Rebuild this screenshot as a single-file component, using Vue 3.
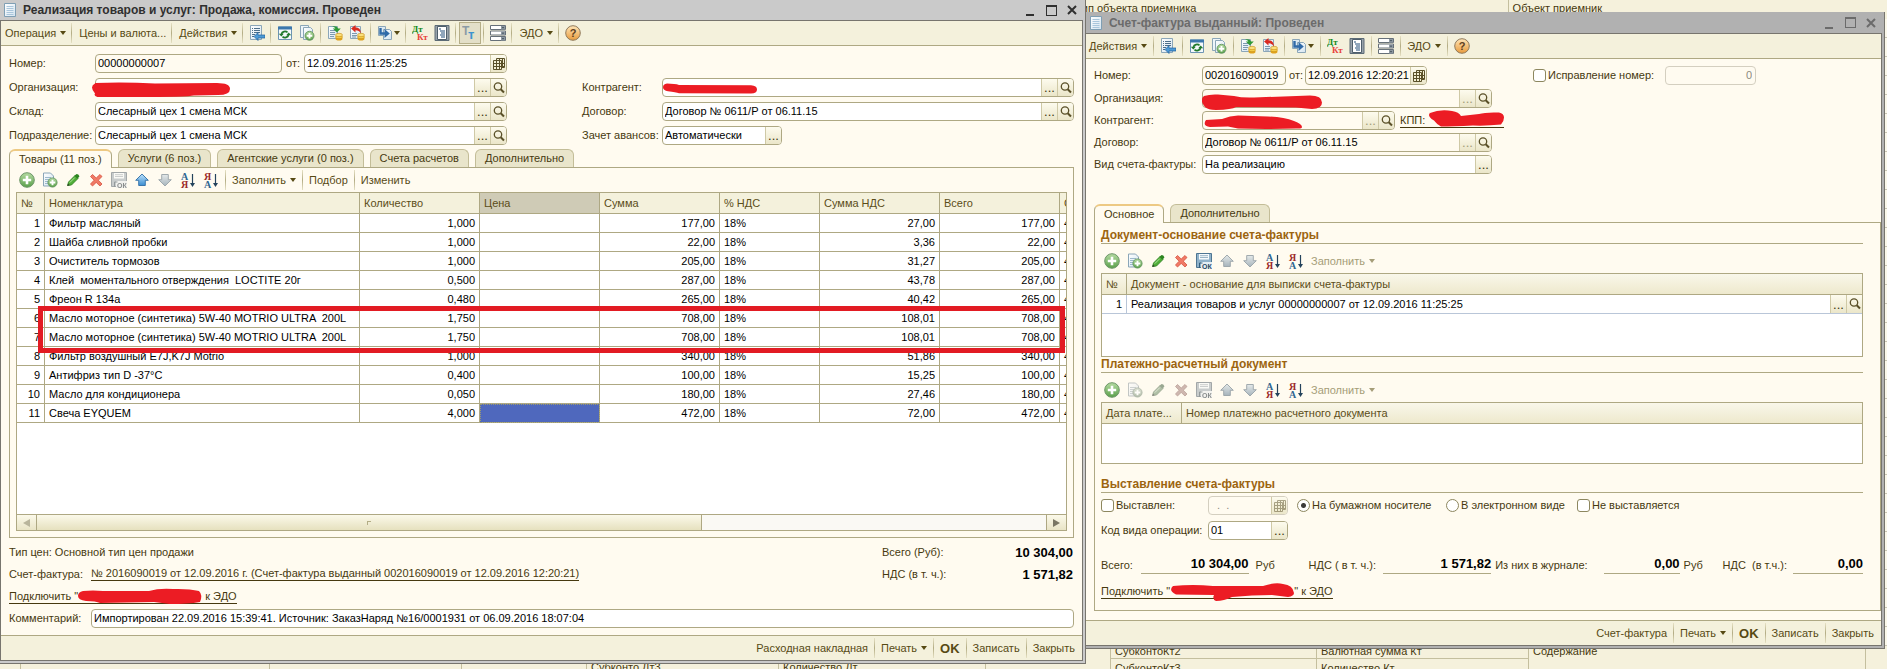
<script setup>
import { ref } from 'vue'

const sep = { kind: 'sep' }
const icon = (name, title, extra = {}) => ({ kind: 'icon', name, title, ...extra })
const text = (label, extra = {}) => ({ kind: 'text', label, ...extra })

const commonTools = [
  text('Действия', { menu: true }), sep,
  icon('goto', 'Найти в списке'), sep,
  icon('refresh', 'Перечитать'), icon('copy', 'Скопировать'), sep,
  icon('post', 'Провести'), icon('unpost', 'Отмена проведения'), sep,
  icon('based', 'На основании', { menu: true }), sep,
  icon('dtkt', 'Результат проведения'), icon('journal', 'Структура подчиненности'), sep
]
const tailTools = [
  icon('rack', 'Свойства'), sep,
  text('ЭДО', { menu: true }), sep,
  icon('help', 'Справка')
]
const saleTools = [
  text('Операция', { menu: true }), sep,
  text('Цены и валюта...'), sep,
  ...commonTools,
  icon('tt', 'Подбор строк', { pressed: true }), sep,
  ...tailTools
]
const invoiceTools = [...commonTools, ...tailTools]

const rowTools = (off = []) => [
  ['add', 'Добавить'], ['addcopy', 'Добавить копированием'], ['edit', 'Изменить'], ['del', 'Удалить'],
  ['save', 'Закончить редактирование'], ['up', 'Вверх'], ['down', 'Вниз'],
  ['sorta', 'По возрастанию'], ['sortz', 'По убыванию']
].map(([n, t]) => icon(n, t, { disabled: off.includes(n) }))

const goodsTools = [
  ...rowTools(['save', 'down']), sep,
  text('Заполнить', { menu: true }), sep,
  text('Подбор'), sep,
  text('Изменить')
]
const baseTools = [...rowTools(['up', 'down']), text('Заполнить', { menu: true, disabled: true })]
const payTools = [
  ...rowTools(['addcopy', 'edit', 'del', 'save', 'up', 'down']),
  text('Заполнить', { menu: true, disabled: true })
]

const footSale = [
  text('Расходная накладная'), sep, text('Печать', { menu: true }), sep,
  text('OK', { bold: true }), sep, text('Записать'), sep, text('Закрыть')
]
const footInvoice = [text('Счет-фактура'), ...footSale.slice(1)]

const saleTabs = ['Товары (11 поз.)', 'Услуги (6 поз.)', 'Агентские услуги (0 поз.)', 'Счета расчетов', 'Дополнительно']
const saleTab = ref(0)
const invoiceTabs = ['Основное', 'Дополнительно']
const invoiceTab = ref(0)

const goods = [
  ['Фильтр масляный', '1,000', '177,00', '27,00'],
  ['Шайба сливной пробки', '1,000', '22,00', '3,36'],
  ['Очиститель тормозов', '1,000', '205,00', '31,27'],
  ['Клей  моментального отверждения  LOCTITE 20г', '0,500', '287,00', '43,78'],
  ['Фреон R 134a', '0,480', '265,00', '40,42'],
  ['Масло моторное (синтетика) 5W-40 MOTRIO ULTRA  200L', '1,750', '708,00', '108,01'],
  ['Масло моторное (синтетика) 5W-40 MOTRIO ULTRA  200L', '1,750', '708,00', '108,01'],
  ['Фильтр воздушный E7J,K7J Motrio', '1,000', '340,00', '51,86'],
  ['Антифриз тип D -37°C', '0,400', '100,00', '15,25'],
  ['Масло для кондиционера', '0,050', '180,00', '27,46'],
  ['Свеча EYQUEM', '4,000', '472,00', '72,00']
]
</script>

<template>
  <svg class="paints" aria-hidden="true">
    <defs>
      <linearGradient id="g-green" x1="0" y1="0" x2="0" y2="1"><stop offset="0" stop-color="#b5dba2" /><stop offset="1" stop-color="#5aa04a" /></linearGradient>
      <linearGradient id="g-orange" x1="0" y1="0" x2="0" y2="1"><stop offset="0" stop-color="#ffe6b8" /><stop offset="1" stop-color="#e89a3c" /></linearGradient>
      <linearGradient id="g-blue" x1="0" y1="0" x2="0" y2="1"><stop offset="0" stop-color="#bfe3fb" /><stop offset="1" stop-color="#3b8ed2" /></linearGradient>
      <linearGradient id="g-doc" x1="0" y1="0" x2="1" y2="1"><stop offset="0" stop-color="#ffffff" /><stop offset="1" stop-color="#d3e4f0" /></linearGradient>
    </defs>
  </svg>
  <svg class="defs" aria-hidden="true">
    <symbol id="i-doc" viewBox="0 0 16 16">
      <path d="M2.5 1.500h11v13h-11z" fill="url(#g-doc)" stroke="#7f9fb4" />
      <path d="M4.500 4.500h7M4.500 6.500h7M4.500 8.500h7M4.500 10.500h7M4.500 12.500h7" stroke="#a9c6dc" />
    </symbol>
    <symbol id="i-goto" viewBox="0 0 16 16">
      <path d="M1.500 .5h11v14h-11z" fill="url(#g-doc)" stroke="#8ba6b8" />
      <path d="M3 3.500h1M5 3.500h6M3 5.500h1M5 5.500h6M3 7.500h1M5 7.500h6M3 9.500h3M3 11.500h2" stroke="#4d6f8a" />
      <path d="M5 11.500l4-4v2.500h7v3h-7v2.500z" fill="#4c9ad6" stroke="#1f5f9b" stroke-width=".7" />
    </symbol>
    <symbol id="i-refresh" viewBox="0 0 16 16">
      <path d="M1.500 2h13v12.500h-13z" fill="#f4f9fc" stroke="#6d94b3" />
      <path d="M1 1.500h14v3h-14z" fill="#3c78ad" />
      <path d="M4.500 9a3.500 3 0 0 1 6-1.600M11.500 10a3.500 3 0 0 1-6 1.600" fill="none" stroke="#217a2c" stroke-width="1.700" />
      <path d="M1.800 8.800h5l-2.500 2.700zM9.200 10.200h5l-2.500-2.700z" fill="#217a2c" />
    </symbol>
    <symbol id="i-copy" viewBox="0 0 16 16">
      <path d="M1.500 .5h8v12h-8z" fill="#eef5f9" stroke="#8ba6b8" />
      <path d="M4.500 2.500h7l2 2v10h-9z" fill="url(#g-doc)" stroke="#8ba6b8" />
      <circle cx="10.500" cy="10.800" r="4.500" fill="url(#g-green)" stroke="#5b8f56" stroke-width=".8" />
      <path d="M10.500 8v5.600M7.700 10.800h5.600" stroke="#fff" stroke-width="1.900" />
    </symbol>
    <symbol id="i-post" viewBox="0 0 16 16">
      <path d="M1.500 1.500h9v12h-9z" fill="url(#g-doc)" stroke="#8ba6b8" />
      <path d="M3 5.500h5M3 7.500h5M3 9.500h5M3 11.500h4" stroke="#7c9ab0" />
      <path d="M5 1.500q5-1 6 2h2.800l-4 4-4-4h2.600q-.5-1.500-3.400-2z" fill="#2f9a35" />
      <ellipse cx="12" cy="13.700" rx="3.500" ry="1.800" fill="#e0a21c" /><ellipse cx="12" cy="12" rx="3.500" ry="1.700" fill="#f7cf4a" stroke="#c88d14" stroke-width=".6" />
      <ellipse cx="12" cy="10" rx="3.500" ry="1.700" fill="#fbe07c" stroke="#c88d14" stroke-width=".6" />
    </symbol>
    <symbol id="i-unpost" viewBox="0 0 16 16">
      <path d="M1.500 1.500h10v12h-10z" fill="url(#g-doc)" stroke="#8ba6b8" />
      <path d="M3 8.500h5M3 10.500h5M3 12h4" stroke="#7c9ab0" />
      <path d="M2 3.500l4.500-3.500v2.200q5 0 5.500 6.300-2-3.200-5.500-3.200v2.200z" fill="#d92a1f" />
      <ellipse cx="12" cy="13.700" rx="3.500" ry="1.800" fill="#e0a21c" /><ellipse cx="12" cy="12" rx="3.500" ry="1.700" fill="#f7cf4a" stroke="#c88d14" stroke-width=".6" />
      <ellipse cx="12" cy="10" rx="3.500" ry="1.700" fill="#fbe07c" stroke="#c88d14" stroke-width=".6" />
    </symbol>
    <symbol id="i-based" viewBox="0 0 16 16">
      <path d="M1.500 1.500h7v9h-7z" fill="#dce9f1" stroke="#8ba6b8" />
      <path d="M6.500 4.500h6l2 2v8h-8z" fill="url(#g-doc)" stroke="#8ba6b8" />
      <path d="M3.500 3v5.500h5" fill="none" stroke="#2f6aa8" stroke-width="2.400" />
      <path d="M7.500 4l5.300 4.500-5.300 4.500z" fill="#2f6aa8" />
    </symbol>
    <symbol id="i-dtkt" viewBox="0 0 16 16">
      <text x="0" y="7" font-family="Liberation Serif" font-size="9" font-weight="700" fill="#168a1c">Дт</text>
      <text x="5" y="15" font-family="Liberation Serif" font-size="9" font-weight="700" fill="#e8413a">Кт</text>
    </symbol>
    <symbol id="i-journal" viewBox="0 0 16 16">
      <path d="M1 .5h14v15h-14z" fill="#98a2aa" stroke="#5c6b76" />
      <path d="M3.500 1.500h9v13h-9z" fill="#fff" stroke="#4f5f6c" />
      <path d="M5 4h2M6 6h5M7 8h4M6 10h5M7 12h4" stroke="#234f7a" stroke-width="1.200" />
    </symbol>
    <symbol id="i-tt" viewBox="0 0 16 16">
      <text x="0" y="10" font-family="Liberation Sans" font-size="12" font-weight="700" fill="#8b9aa5">Т</text>
      <text x="6" y="14" font-family="Liberation Sans" font-size="13" font-weight="700" fill="#3c93cf">т</text>
    </symbol>
    <symbol id="i-rack" viewBox="0 0 16 16">
      <g fill="#fff" stroke="#667079"><path d="M.5 .5h15v4h-15zM.5 6h15v4h-15zM.5 11.500h15v4h-15z" /></g>
      <path d="M11 1h4v3.500h-4zM11 6.500h4v3.500h-4zM11 12h4v3.500h-4z" fill="#8d98a1" />
      <path d="M12 2.200h2l-1 1.300zM12 7.700h2l-1 1.300zM12 13.200h2l-1 1.300z" fill="#1c2b36" />
    </symbol>
    <symbol id="i-help" viewBox="0 0 16 16">
      <circle cx="8" cy="8" r="7.300" fill="url(#g-orange)" stroke="#8f7a5c" />
      <text x="8" y="12" text-anchor="middle" font-family="Liberation Sans" font-size="11" font-weight="700" fill="#5d4020">?</text>
    </symbol>
    <symbol id="i-add" viewBox="0 0 16 16">
      <circle cx="8" cy="8" r="7.300" fill="url(#g-green)" stroke="#6d9668" />
      <path d="M8 3.800v8.400M3.800 8h8.400" stroke="#fff" stroke-width="2.600" />
    </symbol>
    <symbol id="i-addcopy" viewBox="0 0 16 16">
      <path d="M1.500 1h7l3 3v10h-10z" fill="url(#g-doc)" stroke="#8ba6b8" />
      <path d="M3 5.500h6M3 7.500h4M3 9.500h3M3 11.500h3" stroke="#9db9cc" />
      <circle cx="10.500" cy="10.500" r="4.600" fill="url(#g-green)" stroke="#5b8f56" stroke-width=".8" />
      <path d="M10.500 7.700v5.600M7.700 10.500h5.600" stroke="#fff" stroke-width="1.900" />
    </symbol>
    <symbol id="i-edit" viewBox="0 0 16 16">
      <path d="M2.500 13.500l1-3.500 6.500-6.500 3 3-6.500 6.500z" fill="#4fae37" stroke="#2b7d1f" stroke-width=".8" />
      <path d="M9.500 3.800l1.700-1.600q1 -.6 1.800 .2l1 1q.7 1 0 1.700l-1.600 1.600z" fill="#2c8420" />
      <path d="M2.300 14l.8-2.400 1.600 1.600z" fill="#34402a" />
      <path d="M4.800 10.600l5-5" stroke="#b3e59f" />
    </symbol>
    <symbol id="i-del" viewBox="0 0 16 16">
      <path d="M2.500 4.500l2-2 3.700 3.500 3.800-3.500 2 2-3.700 3.700 3.700 3.800-2 2-3.800-3.600-3.700 3.600-2-2 3.600-3.800z" fill="#f07a66" stroke="#d6523f" stroke-width=".8" />
    </symbol>
    <symbol id="i-save" viewBox="0 0 16 16">
      <path d="M.5 .5h15v14h-15z" fill="#8fb2ca" stroke="#4d7592" />
      <path d="M3 1h10v5.500h-10z" fill="#f6fafc" /><path d="M4 2.700h8M4 4.500h8" stroke="#9ab4c6" />
      <path d="M5 9h11v7h-11z" fill="#e4eef4" />
      <path d="M3.500 15v-5h3" fill="none" stroke="#35607f" />
      <text x="6" y="15.500" font-family="Liberation Sans" font-size="7" font-weight="700" fill="#27465d">ОК</text>
    </symbol>
    <symbol id="i-up" viewBox="0 0 16 16">
      <path d="M8 2l6.300 6.300h-3v5.200h-6.600v-5.200h-3z" fill="url(#g-blue)" stroke="#2f6ea6" stroke-width=".9" />
    </symbol>
    <symbol id="i-down" viewBox="0 0 16 16">
      <path d="M8 14l6.300-6.300h-3v-5.200h-6.600v5.200h-3z" fill="url(#g-blue)" stroke="#2f6ea6" stroke-width=".9" />
    </symbol>
    <symbol id="i-sorta" viewBox="0 0 16 16">
      <text x="1" y="7.500" font-family="Liberation Serif" font-size="10" font-weight="700" fill="#2f6690">А</text>
      <text x="1" y="15.500" font-family="Liberation Serif" font-size="10" font-weight="700" fill="#9c2a2a">Я</text>
      <path d="M12.500 2v11" stroke="#24435c" stroke-width="1.200" /><path d="M10 11h5l-2.500 4z" fill="#24435c" />
    </symbol>
    <symbol id="i-sortz" viewBox="0 0 16 16">
      <text x="1" y="7.500" font-family="Liberation Serif" font-size="10" font-weight="700" fill="#9c2a2a">Я</text>
      <text x="1" y="15.500" font-family="Liberation Serif" font-size="10" font-weight="700" fill="#2f6690">А</text>
      <path d="M12.500 2v11" stroke="#24435c" stroke-width="1.200" /><path d="M10 11h5l-2.500 4z" fill="#24435c" />
    </symbol>
    <symbol id="i-lens" viewBox="0 0 16 16">
      <circle cx="7" cy="6.500" r="3.700" fill="none" stroke="#5a5028" stroke-width="1.300" />
      <path d="M9.700 9.200l3.300 3.300" stroke="#5a5028" stroke-width="2" />
    </symbol>
    <symbol id="i-cal" viewBox="0 0 16 16">
      <path d="M5.500 2.500h8v9h-8z" fill="#f3efd2" stroke="#5a5028" />
      <path d="M2.500 4.500h8v9h-8z" fill="#f3efd2" stroke="#5a5028" />
      <path d="M2.500 7.500h11M2.500 10.500h11M5.500 4.500v9M8.500 2.500v11M11.500 2.500v9" stroke="#5a5028" />
    </symbol>
  </svg>

  <div class="desktop">
    <div class="backdrop" aria-hidden="true">
      <div class="strip strip-top">
        <span class="bcell b-from">Тип объекта приемника</span><span class="bcell b-to">Объект приемник</span>
      </div>
      <div class="strip strip-bottom">
        <span class="bcell"></span><span class="bcell"></span><span class="bcell"></span><span class="bcell"></span>
        <span class="bcell">Субконто Дт3</span><span class="bcell">Количество Дт</span><span class="bcell"></span>
        <div class="bcell two"><span>СубконтоКт2</span><span>СубконтоКт3</span></div>
        <div class="bcell two"><span>Валютная сумма Кт</span><span>Количество Кт</span></div>
        <div class="bcell two single"><span>Содержание</span></div>
        <span class="bcell"></span>
      </div>
    </div>

    <!-- Реализация товаров и услуг -->
    <section class="win sale">
      <header class="title">
        <svg class="ico"><use href="#i-doc" /></svg>
        <h1>Реализация товаров и услуг: Продажа, комиссия. Проведен</h1>
        <button class="wbtn" aria-label="Свернуть"><i class="w-min"></i></button>
        <button class="wbtn" aria-label="Развернуть"><i class="w-max"></i></button>
        <button class="wbtn" aria-label="Закрыть окно"><svg class="w-x" viewBox="0 0 10 10"><path d="M1 1l8 8M9 1l-8 8" /></svg></button>
      </header>
      <div class="body">
        <nav class="bar main-bar">
          <template v-for="(t, i) in saleTools" :key="i">
            <i v-if="t.kind === 'sep'" class="sep"></i>
            <button v-else class="tool" :class="{ pressed: t.pressed }" :title="t.title">
              <svg v-if="t.kind === 'icon'" class="ico"><use :href="'#i-' + t.name" /></svg>
              <span v-else>{{ t.label }}</span><i v-if="t.menu" class="arrow"></i>
            </button>
          </template>
        </nav>

        <form class="form" @submit.prevent>
          <label for="s-num">Номер:</label>
          <div class="pair">
            <div class="field ro num"><input id="s-num" value="00000000007" readonly /></div>
            <label for="s-date">от:</label>
            <div class="field"><input id="s-date" value="12.09.2016 11:25:25" /><button aria-label="Календарь"><svg class="ico"><use href="#i-cal" /></svg></button></div>
          </div>
          <i class="c3"></i>

          <label for="s-org">Организация:</label>
          <div class="field"><input id="s-org" />
            <svg class="mark m-org" viewBox="0 0 138 15"><path d="M3 1q30-1 60 .5l62-.5q13 0 13 6t-12 6l-24 .5q-6 1.500-60 1.500l-34 .5q-7-1-5-4-6-7 0-10z" /></svg>
            <button>...</button><button aria-label="Открыть"><svg class="ico"><use href="#i-lens" /></svg></button></div>
          <label class="c4" for="s-ctr">Контрагент:</label>
          <div class="field"><input id="s-ctr" />
            <svg class="mark m-ctr" viewBox="0 0 94 11"><path d="M4 .5q8 0 12 1.500l72 .2q6 .3 6 4.200t-6 4l-72-.2q-3-1-11-2-5-1-5-4t4-3.700z" /></svg>
            <button>...</button><button aria-label="Открыть"><svg class="ico"><use href="#i-lens" /></svg></button></div>

          <label for="s-store">Склад:</label>
          <div class="field"><input id="s-store" value="Слесарный цех 1 смена МСК" /><button>...</button><button aria-label="Открыть"><svg class="ico"><use href="#i-lens" /></svg></button></div>
          <label class="c4" for="s-dog">Договор:</label>
          <div class="field"><input id="s-dog" value="Договор № 0611/Р от 06.11.15" /><button>...</button><button aria-label="Открыть"><svg class="ico"><use href="#i-lens" /></svg></button></div>

          <label for="s-dep">Подразделение:</label>
          <div class="field"><input id="s-dep" value="Слесарный цех 1 смена МСК" /><button>...</button><button aria-label="Открыть"><svg class="ico"><use href="#i-lens" /></svg></button></div>
          <label class="c4" for="s-adv">Зачет авансов:</label>
          <div class="field short"><input id="s-adv" value="Автоматически" /><button>...</button></div>
        </form>

        <div class="tabs" role="tablist">
          <button v-for="(t, i) in saleTabs" :key="t" role="tab" class="tab" :class="{ on: saleTab === i }" :aria-selected="saleTab === i" @click="saleTab = i">{{ t }}</button>
        </div>
        <div class="panel goods-panel">
          <nav class="bar mini">
            <template v-for="(t, i) in goodsTools" :key="i">
              <i v-if="t.kind === 'sep'" class="sep"></i>
              <button v-else class="tool" :disabled="t.disabled" :title="t.title">
                <svg v-if="t.kind === 'icon'" class="ico"><use :href="'#i-' + t.name" /></svg>
                <span v-else>{{ t.label }}</span><i v-if="t.menu" class="arrow"></i>
              </button>
            </template>
          </nav>
          <div class="grid-box goods-box">
            <div class="clip">
              <table class="goods">
                <colgroup><col class="w28" /><col class="w315" /><col class="w120" /><col class="w120" /><col class="w120" /><col class="w100" /><col class="w120" /><col class="w120" /><col /></colgroup>
                <thead><tr><th>№</th><th>Номенклатура</th><th>Количество</th><th class="cur">Цена</th><th>Сумма</th><th>% НДС</th><th>Сумма НДС</th><th>Всего</th><th>С</th></tr></thead>
                <tbody>
                  <tr v-for="(g, i) in goods" :key="i">
                    <td class="r">{{ i + 1 }}</td><td>{{ g[0] }}</td><td class="r">{{ g[1] }}</td>
                    <td :class="{ sel: i === goods.length - 1 }"></td>
                    <td class="r">{{ g[2] }}</td><td>18%</td><td class="r">{{ g[3] }}</td><td class="r">{{ g[2] }}</td><td>4</td>
                  </tr>
                </tbody>
              </table>
              <div class="frame"></div>
            </div>
            <div class="scroll">
              <button class="sb left" aria-label="Влево"><i></i></button>
              <div class="thumb"><i></i></div>
              <div class="track"></div>
              <button class="sb right" aria-label="Вправо"><i></i></button>
            </div>
          </div>
        </div>

        <div class="info">
          <div class="irow"><span>Тип цен: Основной тип цен продажи</span><span class="tl">Всего (Руб):</span><output>10 304,00</output></div>
          <div class="irow"><span class="lab">Счет-фактура:</span><a class="link" href="#">№ 2016090019 от 12.09.2016 г. (Счет-фактура выданный 002016090019 от 12.09.2016 12:20:21)</a><span class="tl">НДС (в т. ч.):</span><output>1 571,82</output></div>
          <div class="irow"><a class="link" href="#">Подключить "<svg class="blot" viewBox="0 0 124 14"><path d="M5 2q10-1 20 0l46 0q10-3 24-2 16-.5 26 2 4 4 1 11-12 2-30 2l-16-2-54 1q-4-2-14-2-8-1-8-5t5-5z" /></svg> к ЭДО</a></div>
          <div class="irow comment"><label class="lab" for="s-com">Комментарий:</label><div class="field"><input id="s-com" value="Импортирован 22.09.2016 15:39:41. Источник: ЗаказНаряд №16/0001931 от 06.09.2016 18:07:04" /></div></div>
        </div>

        <footer class="bar foot">
          <template v-for="(t, i) in footSale" :key="i">
            <i v-if="t.kind === 'sep'" class="sep"></i>
            <button v-else class="tool" :class="{ bold: t.bold }"><span>{{ t.label }}</span><i v-if="t.menu" class="arrow"></i></button>
          </template>
        </footer>
      </div>
    </section>

    <!-- Счет-фактура выданный -->
    <section class="win invoice">
      <header class="title">
        <svg class="ico"><use href="#i-doc" /></svg>
        <h1>Счет-фактура выданный: Проведен</h1>
        <button class="wbtn" aria-label="Свернуть"><i class="w-min"></i></button>
        <button class="wbtn" aria-label="Развернуть"><i class="w-max"></i></button>
        <button class="wbtn" aria-label="Закрыть окно"><svg class="w-x" viewBox="0 0 10 10"><path d="M1 1l8 8M9 1l-8 8" /></svg></button>
      </header>
      <div class="body">
        <nav class="bar main-bar">
          <template v-for="(t, i) in invoiceTools" :key="i">
            <i v-if="t.kind === 'sep'" class="sep"></i>
            <button v-else class="tool" :title="t.title">
              <svg v-if="t.kind === 'icon'" class="ico"><use :href="'#i-' + t.name" /></svg>
              <span v-else>{{ t.label }}</span><i v-if="t.menu" class="arrow"></i>
            </button>
          </template>
        </nav>

        <form class="iform" @submit.prevent>
          <div class="frow">
            <label class="lab" for="i-num">Номер:</label>
            <div class="field ro w84"><input id="i-num" value="002016090019" readonly /></div>
            <label class="ot" for="i-date">от:</label>
            <div class="field ro w122"><input id="i-date" value="12.09.2016 12:20:21" readonly /><button aria-label="Календарь"><svg class="ico"><use href="#i-cal" /></svg></button></div>
            <label class="check fix"><input type="checkbox" />Исправление номер:</label>
            <div class="field ro off w91"><input class="r" aria-label="Номер исправления" value="0" disabled /></div>
          </div>
          <div class="frow">
            <label class="lab" for="i-org">Организация:</label>
            <div class="field ro w290"><input id="i-org" readonly />
              <svg class="mark m-iorg" viewBox="0 0 120 16"><path d="M2 2q6-2 14-1.500l16 1.500q8 2 20 1.500l56-2q12 0 12 7 0 6.500-10 6.500l-16-1.500-60-.5q-4 2.500-20 3-8 0-11-3-6-7-1-11z" /></svg>
              <button disabled>...</button><button aria-label="Открыть"><svg class="ico"><use href="#i-lens" /></svg></button></div>
          </div>
          <div class="frow">
            <label class="lab" for="i-ctr">Контрагент:</label>
            <div class="field ro w193"><input id="i-ctr" readonly />
              <svg class="mark m-ictr" viewBox="0 0 99 14"><path d="M3 5l16-1q8-3.500 16-3.500l30 1q16 .5 26 4.500 8 3 8 6 0 2-6 1.500l-30 .5-28-.5-10-2-18 .5q-8-1-4-7z" /></svg>
              <button disabled>...</button><button aria-label="Открыть"><svg class="ico"><use href="#i-lens" /></svg></button></div>
            <a class="link kpp" href="#">КПП: <svg class="blot b-kpp" viewBox="0 0 76 17"><path d="M2 3q10-4 22-2 7 1 9 5l18-2q6-2 20-1.500 5 1 5 5t-3 7q-14 1.500-28 1-20 1-32 1-5-3-7-6-7-4-4-8z" /></svg></a>
          </div>
          <div class="frow">
            <label class="lab" for="i-dog">Договор:</label>
            <div class="field ro w290"><input id="i-dog" value="Договор № 0611/Р от 06.11.15" readonly /><button disabled>...</button><button aria-label="Открыть"><svg class="ico"><use href="#i-lens" /></svg></button></div>
          </div>
          <div class="frow">
            <label class="lab" for="i-kind">Вид счета-фактуры:</label>
            <div class="field w290"><input id="i-kind" value="На реализацию" /><button>...</button></div>
          </div>
        </form>

        <div class="tabs" role="tablist">
          <button v-for="(t, i) in invoiceTabs" :key="t" role="tab" class="tab" :class="{ on: invoiceTab === i }" :aria-selected="invoiceTab === i" @click="invoiceTab = i">{{ t }}</button>
        </div>
        <div class="panel inv-panel">
          <h2>Документ-основание счета-фактуры</h2>
          <nav class="bar mini">
            <button v-for="(t, i) in baseTools" :key="i" class="tool" :disabled="t.disabled" :title="t.title">
              <svg v-if="t.kind === 'icon'" class="ico"><use :href="'#i-' + t.name" /></svg>
              <span v-else>{{ t.label }}</span><i v-if="t.menu" class="arrow"></i>
            </button>
          </nav>
          <div class="grid-box base-box">
            <table class="soft">
              <colgroup><col class="w25" /><col /></colgroup>
              <thead><tr><th>№</th><th>Документ - основание для выписки счета-фактуры</th></tr></thead>
              <tbody><tr><td class="r">1</td><td class="flush"><div class="cell">Реализация товаров и услуг 00000000007 от 12.09.2016 11:25:25<span class="cell-btns"><button>...</button><button aria-label="Открыть"><svg class="ico"><use href="#i-lens" /></svg></button></span></div></td></tr></tbody>
            </table>
          </div>
          <h2 class="tight">Платежно-расчетный документ</h2>
          <nav class="bar mini">
            <button v-for="(t, i) in payTools" :key="i" class="tool" :disabled="t.disabled" :title="t.title">
              <svg v-if="t.kind === 'icon'" class="ico"><use :href="'#i-' + t.name" /></svg>
              <span v-else>{{ t.label }}</span><i v-if="t.menu" class="arrow"></i>
            </button>
          </nav>
          <div class="grid-box pay-box">
            <table class="soft">
              <colgroup><col class="w80" /><col /></colgroup>
              <thead><tr><th>Дата плате...</th><th>Номер платежно расчетного документа</th></tr></thead>
            </table>
          </div>
          <h2 class="third">Выставление счета-фактуры</h2>
          <div class="orow">
            <label class="check olab"><input type="checkbox" />Выставлен:</label>
            <div class="field ro off w80f"><input aria-label="Дата выставления" value="  .  ." disabled /><button disabled aria-label="Календарь"><svg class="ico"><use href="#i-cal" /></svg></button></div>
            <label class="check r1"><input type="radio" name="way" checked />На бумажном носителе</label>
            <label class="check r2"><input type="radio" name="way" />В электронном виде</label>
            <label class="check r3"><input type="checkbox" />Не выставляется</label>
          </div>
          <div class="orow">
            <label class="olab" for="i-code">Код вида операции:</label>
            <div class="field w80f"><input id="i-code" value="01" /><button>...</button></div>
          </div>
          <div class="totals">
            <span>Всего:</span><output>10 304,00</output><span class="p7">Руб</span>
            <span>НДС ( в т. ч.):</span><output>1 571,82</output><span class="p4">Из них в журнале:</span>
            <output>0,00</output><span class="p4">Руб</span><span>НДС&nbsp; (в т.ч.):</span><output>0,00</output>
          </div>
          <div class="connect"><a class="link" href="#">Подключить "<svg class="blot b-inv" viewBox="0 0 124 16"><path d="M3 2q20-2 40 0l50 0q12-4 20-2 10 1 11 9 0 3-6 4l-16-2q-20 0-40 2-8 4-16 4-4-2-2-6-20-.5-38-.5-8-4-3-8.500z" /></svg>" к ЭДО</a></div>
        </div>

        <footer class="bar foot">
          <template v-for="(t, i) in footInvoice" :key="i">
            <i v-if="t.kind === 'sep'" class="sep"></i>
            <button v-else class="tool" :class="{ bold: t.bold }"><span>{{ t.label }}</span><i v-if="t.menu" class="arrow"></i></button>
          </template>
        </footer>
      </div>
    </section>
  </div>
</template>

<style>
body { margin: 0; background: #f5f1dc; }
</style>

<style scoped>
.paints { position: absolute; width: 0; height: 0; }
.defs { display: none; }
.desktop {
  --line: #aea883; --cream: #fffbf0; --bar: #f4f1dc; --ink: #46390f; --red: #ec1c24;
  position: relative; display: grid; grid-template-columns: 1086fr 801fr;
  min-height: 100vh; box-sizing: border-box; overflow: hidden;
  font: 11px/15px "Liberation Sans", Arial, sans-serif; color: var(--ink);
}
.desktop *, .desktop *::before { box-sizing: border-box; }
button, input { font: inherit; color: inherit; margin: 0; padding: 0; border: 0; background: none; }
i { display: block; }
.ico { width: 16px; height: 16px; display: block; flex: none; }

/* backdrop */
.backdrop { position: absolute; inset: 0; display: flex; flex-direction: column; justify-content: space-between; background: repeating-linear-gradient(#fbf8ea 0 18px, #c9c5b4 18px 19px); }
.strip { display: flex; background: #f5f1dc; overflow: hidden; }
.strip-top { height: 19px; margin-left: 57%; }
.strip-bottom { height: 23px; }
.bcell { border-left: 1px solid #c4bf9e; padding: 1px 4px; white-space: nowrap; overflow: hidden; }
.b-from { width: 432px; border: 0; padding-left: 0; }
.strip-bottom .bcell { width: 10%; padding-top: 14px; }
.strip-bottom .bcell:nth-child(1) { width: 20px; border: 0; }
.strip-bottom .bcell:nth-child(2) { width: 249px; }
.strip-bottom .bcell:nth-child(3) { width: 192px; }
.strip-bottom .bcell:nth-child(4) { width: 125px; }
.strip-bottom .bcell:nth-child(5) { width: 192px; }
.strip-bottom .bcell:nth-child(6) { width: 207px; }
.strip-bottom .bcell:nth-child(7) { width: 125px; }
.strip-bottom .bcell:nth-child(8) { width: 206px; }
.strip-bottom .bcell:nth-child(9) { width: 212px; }
.strip-bottom .bcell:nth-child(10) { width: 337px; }
.strip-bottom .bcell:nth-child(11) { flex: 1; }
.strip-bottom .two { display: flex; flex-direction: column; padding: 0; }
.two span { height: 13px; line-height: 10px; padding: 0 4px; border-bottom: 1px solid #c4bf9e; flex: none; }
.two span + span { line-height: 18px; border: 0; }
.two.single span { border: 0; }

/* windows */
.win { position: relative; display: flex; flex-direction: column; min-width: 0; background: #cacaca; border: solid #77756e; border-width: 0 1px 1px 0; padding: 0 2px 2px 0; }
.sale { margin-bottom: 5px; }
.invoice { margin: 12px 2px 20px 0; background: #b1b1b1; }
.title { display: flex; align-items: center; height: 20px; padding: 0 4px 0 2px; color: #2f2f2f; }
.invoice .title { height: 21px; color: #6b6b6b; }
.title h1 { flex: 1; margin: 0 0 0 5px; font: bold 12px/20px "Liberation Sans", sans-serif; white-space: nowrap; }
.wbtn { width: 14px; height: 14px; margin-left: 7px; display: flex; align-items: center; justify-content: center; color: inherit; }
.w-min { width: 8px; height: 2px; margin-top: 10px; background: currentColor; }
.w-max { width: 11px; height: 11px; border: 1px solid currentColor; border-top-width: 2px; }
.w-x { width: 10px; height: 10px; stroke: currentColor; stroke-width: 2; fill: none; }
.body { flex: 1; display: flex; flex-direction: column; background: var(--cream); border: 1px solid #77756e; min-height: 0; }
.invoice .body { border-left: 0; }

/* command bars */
.bar { display: flex; align-items: center; }
.main-bar { height: 25px; background: var(--bar); border-bottom: 1px solid var(--line); }
.tool { display: flex; align-items: center; height: 22px; padding: 0 3px; color: #574a14; white-space: nowrap; }
.tool.pressed { background: #e3dfc8; box-shadow: inset 0 0 0 1px #b5ae88; }
.tool.bold { font-weight: bold; font-size: 13px; }
.tool:disabled { color: #a59d78; }
.tool:disabled .ico { filter: grayscale(.7); opacity: .6; }
.arrow { width: 0; height: 0; margin-left: 4px; border: solid transparent; border-width: 4px 3px 0; border-top-color: currentColor; }
.ico + .arrow { margin-left: 1px; }
.sep { width: 1px; height: 20px; margin: 0 3px; background: linear-gradient(#e6e1c4, #b3ac84, #e6e1c4); flex: none; }
.sale .main-bar .sep { margin-left: 2px; }
.sale .main-bar span { padding-left: 1px; }
.mini { gap: 1px; }
.mini .sep { margin: 0 2px; }
.foot { height: 25px; justify-content: flex-end; padding-right: 4px; background: var(--bar); border-top: 1px solid var(--line); }

/* fields */
.field { position: relative; display: flex; height: 19px; min-width: 0; flex: 1; background: #fff; border: 1px solid var(--line); border-radius: 4px; overflow: visible; }
.field.ro { background: var(--cream); }
.field.off { border-color: #d4cfc0; color: #8d8a80; }
.field input { flex: 1; min-width: 0; width: 0; padding: 0 0 0 2px; color: #000; outline: none; }
.field input.r { padding-right: 3px; text-align: right; }
.field.off input { color: #8d8a80; }
.field button, .cell-btns button { width: 16px; border-left: 1px solid #cfc9a6; background: linear-gradient(#fdfbee, #ebe6c9); font-size: 13px; line-height: 15px; display: flex; align-items: center; justify-content: center; color: #3e350f; flex: none; }
.field button:last-child { border-radius: 0 3px 3px 0; }
.field button:disabled { color: #a39c78; }
.off button .ico { opacity: .5; }
.mark { position: absolute; fill: var(--red); }
.m-org { left: -4px; top: 3px; width: 138px; height: 15px; }
.m-ctr { left: 0; top: 4px; width: 94px; height: 11px; }
.m-iorg { left: -1px; top: 4px; width: 120px; height: 16px; }
.m-ictr { left: 0; top: 3px; width: 99px; height: 14px; }
label, .irow span { white-space: nowrap; }

.form { display: grid; grid-template-columns: 86px 1fr 75px 80px 1fr; gap: 5px 0; align-items: center; padding: 8px 8px 4px; }
.form .c4 { grid-column: 4; }
.form .c3 { grid-column: 3 / 6; }
.pair { display: flex; align-items: center; gap: 4px; }
.pair .field.num { flex: 0 1 187px; }
.form .short { width: 120px; }

.iform { display: flex; flex-direction: column; gap: 3px; padding: 7px 0 30px 8px; }
.frow { display: flex; align-items: center; }
.frow:first-child { margin-bottom: 1px; }
.lab { flex: none; width: 82px; }
.iform .lab { width: 108px; }
.w84 { flex: 0 0 84px; } .w91 { flex: 0 0 91px; } .w122 { flex: 0 0 122px; }
.w290 { flex: 0 0 290px; } .w193 { flex: 0 0 193px; } .w80f { flex: 0 0 80px; }
.ot { width: 19px; padding-left: 3px; }
.fix { margin-left: 106px; width: 132px; }
.check { display: flex; align-items: center; gap: 2px; }
.check input { appearance: none; width: 13px; height: 13px; border: 1px solid #8d875f; border-radius: 3px; background: #fff; flex: none; }
.check input[type="radio"] { border-radius: 50%; }
.check input[type="radio"]:checked { background: radial-gradient(circle, #3b3b3b 0 2px, #fff 3px); }
.link { color: inherit; text-decoration: none; border-bottom: 1px solid #46390f; line-height: 13px; display: inline-flex; align-items: flex-end; white-space: pre; }
.blot { fill: var(--red); width: 124px; height: 14px; overflow: visible; }
.b-kpp { width: 76px; height: 17px; }
.kpp { margin-left: 5px; height: 14px; }
.b-inv { height: 16px; margin-bottom: -2px; }

/* tabs and panels */
.tabs { display: flex; gap: 6px; height: 19px; padding-left: 8px; flex: none; }
.tab { padding: 0 9px; height: 18px; line-height: 17px; background: #e9e5cb; border: 1px solid #c3bd98; border-bottom: 0; border-radius: 6px 6px 0 0; white-space: nowrap; }
.tab.on { position: relative; height: 19px; background: var(--cream); border-color: var(--line); border-top: 2px solid #edc983; z-index: 1; line-height: 17px; }
.panel { display: flex; flex-direction: column; flex: 1; min-height: 0; margin: -1px 8px 0; border: 1px solid var(--line); }
.goods-panel { padding: 0 6px 6px; }
.goods-panel .mini { height: 24px; }
.inv-panel { margin-right: 0; margin-bottom: 9px; padding: 0 17px 0 6px; }

.grid-box { position: relative; display: flex; flex-direction: column; background: #fff; border: 1px solid var(--line); overflow: hidden; }
.goods-box { flex: 1; }
.clip { position: relative; flex: 1; overflow: hidden; }
table { width: 100%; table-layout: fixed; border-collapse: separate; border-spacing: 0; }
th, td { height: 19px; padding: 1px 4px 0; border-right: 1px solid var(--line); border-bottom: 1px solid var(--line); white-space: pre; overflow: hidden; text-align: left; font-weight: normal; line-height: 15px; }
th { height: 21px; background: var(--bar); color: #5b4d18; padding-top: 0; }
th:last-child, td:last-child { border-right: 0; }
.goods th:last-child, .goods td:last-child { padding-right: 0; }
td { color: #000; }
td.r { text-align: right; }
td.flush { padding-top: 0; padding-right: 0; }
th.cur { background: #cfcbb6; }
td.sel { background: #4f68bd; outline: 1px dotted #9a9a70; outline-offset: -1px; }
.w28 { width: 28px; } .w315 { width: 315px; } .w120 { width: 120px; } .w100 { width: 100px; } .w25 { width: 25px; } .w80 { width: 80px; }
.frame { position: absolute; left: 21px; right: 1px; top: 113px; height: 47px; border: 5px solid #e21b23; }
.scroll { display: flex; height: 16px; border-top: 1px solid var(--line); background: #faf9f4; flex: none; }
.sb { width: 20px; display: flex; align-items: center; justify-content: center; background: linear-gradient(#fbf9ea, #e9e4c6); border-right: 1px solid var(--line); }
.sb i { border: solid transparent; border-width: 4px 0; }
.sb.left i { border-right: 7px solid #b9b59c; }
.sb.right { border-right: 0; border-left: 1px solid var(--line); }
.sb.right i { border-left: 7px solid #7a7663; }
.thumb { flex: 664; display: flex; align-items: center; justify-content: center; background: linear-gradient(#fbf9ea, #e6e1bf); border-right: 1px solid var(--line); }
.thumb i { width: 4px; height: 4px; border: solid #b3ad86; border-width: 1px 0 0 1px; }
.track { flex: 344; }

h2 { margin: 0; height: 21px; padding-top: 5px; border-bottom: 1px solid var(--line); color: #9c640f; font: bold 12px/15px "Liberation Sans", sans-serif; flex: none; }
h2.tight { height: 16px; padding-top: 0; }
h2.third { height: 29px; padding-top: 13px; }
.inv-panel .mini { height: 29px; padding-top: 5px; flex: none; }
.soft th { background: linear-gradient(#f9f7ea, #eee9cd); }
.soft td { border-color: #b9c6d8; }
.base-box { min-height: 84px; }
.pay-box { min-height: 62px; }
.cell { display: flex; justify-content: space-between; height: 18px; line-height: 18px; }
.cell-btns { display: flex; }

.orow { display: flex; align-items: center; margin-top: 3px; }
.orow + .orow { margin-top: 6px; }
.olab { width: 107px; flex: none; }
.r1 { margin-left: 9px; width: 149px; } .r2 { width: 131px; }
.totals { display: grid; grid-template-columns: 40px 107fr 60px 74px 108fr 113px 75fr 43px 70px 70fr; align-items: end; height: 22px; margin-top: 12px; }
.totals span { line-height: 18px; white-space: nowrap; }
.totals output { border-bottom: 1px solid var(--line); padding-bottom: 2px; text-align: right; }
.p7 { padding-left: 7px; } .p4 { padding-left: 4px; }
output { font-weight: bold; font-size: 13px; color: #000; }
.connect { height: 16px; margin-top: 9px; display: flex; align-items: flex-end; }

/* info rows */
.info { padding: 3px 8px 7px; flex: none; }
.irow { display: flex; align-items: center; height: 22px; }
.irow .tl { margin-left: auto; width: 91px; }
.irow output { width: 101px; text-align: right; padding-right: 1px; }
.irow.comment { height: 19px; margin-top: 2px; }
</style>
